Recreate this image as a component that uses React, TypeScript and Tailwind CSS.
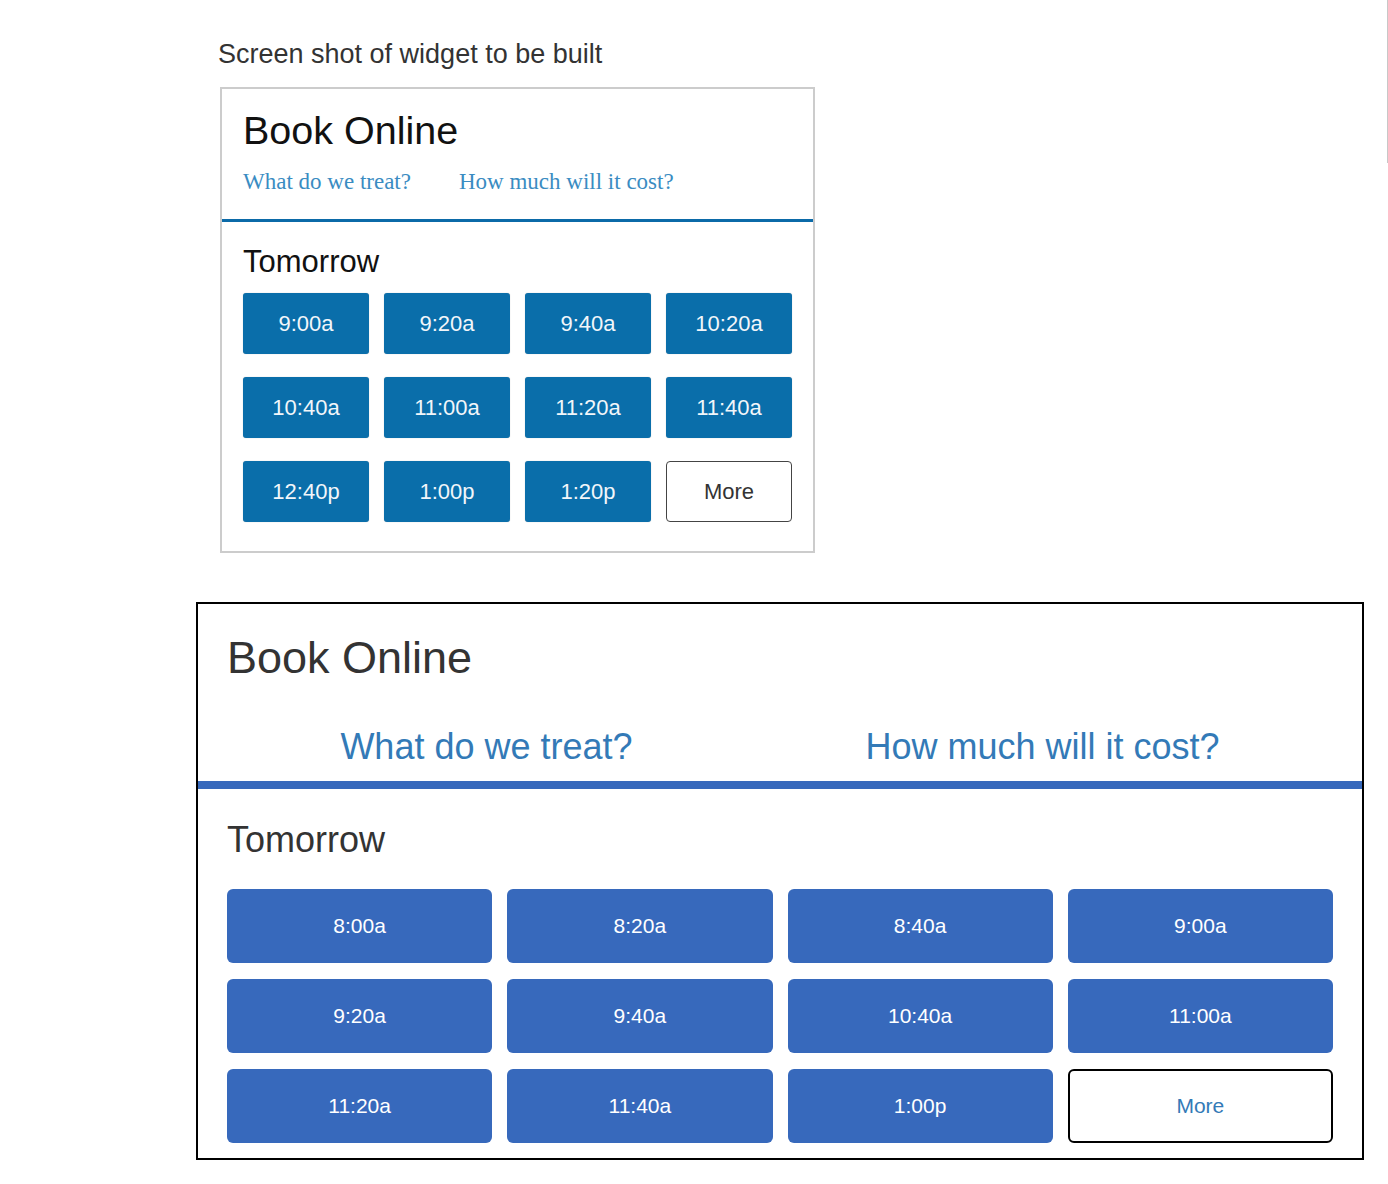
const oldTimes = ['9:00a', '9:20a', '9:40a', '10:20a', '10:40a', '11:00a', '11:20a', '11:40a', '12:40p', '1:00p', '1:20p'];
const newTimes = ['8:00a', '8:20a', '8:40a', '9:00a', '9:20a', '9:40a', '10:40a', '11:00a', '11:20a', '11:40a', '1:00p'];

// the mockup image from the ticket, rebuilt
const MockWidget = () => {
  return (
    <div className="ml-[24px] mt-[17px] w-[595px] border-2 border-[#cccccc] bg-white">
      <div className="px-[21px] pt-[22px] pb-[26px] border-b-[3px] border-[#0b6aa8]">
        <h3 className="text-[39.5px] leading-[39px] text-[#111111]">Book Online</h3>
        <div className="mt-[21px] flex text-[23px] leading-[22px] text-[#3a8cc2] font-['Liberation_Serif',serif]">
          <span className="w-[216px]">What do we treat?</span>
          <span>How much will it cost?</span>
        </div>
      </div>
      <div className="px-[21px] pt-[25px] pb-[29px]">
        <h4 className="text-[31px] leading-[30px] text-[#111111]">Tomorrow</h4>
        <div className="mt-[16px] grid grid-cols-4 gap-x-[15px] gap-y-[23px]">
          {oldTimes.map((t) => (
            <button
              key={t}
              className="h-[61px] rounded-[3px] bg-[#0a6eaa] text-[22px] text-[#f2f6fa] shadow-[0_0_1px_rgba(0,0,0,0.3)]"
            >
              {t}
            </button>
          ))}
          <button className="h-[61px] rounded-[4px] border-[1.5px] border-[#444444] bg-white text-[22px] text-[#333333]">
            More
          </button>
        </div>
      </div>
    </div>
  );
};

const BookOnline = () => {
  return (
    <div className="mt-[49px] w-[1168px] border-2 border-black bg-white">
      <div className="border-b-[8px] border-[#3769bc] px-[29px] pt-[32px] pb-[16px]">
        <h1 className="text-[45px] leading-[44px] text-[#333333]">Book Online</h1>
        <div className="mt-[49px] flex justify-center gap-[233px] text-[36px] leading-[36px] text-[#337ab7]">
          <a href="#">What do we treat?</a>
          <a href="#">How much will it cost?</a>
        </div>
      </div>
      <div className="px-[29px] pt-[33px] pb-[15px]">
        <h2 className="text-[36px] leading-[35px] text-[#333333]">Tomorrow</h2>
        <div className="mt-[32px] grid grid-cols-4 gap-x-[15px] gap-y-4">
          {newTimes.map((t) => (
            <button key={t} className="h-[74px] rounded-[6px] bg-[#3769bc] text-[21px] text-white">
              {t}
            </button>
          ))}
          <button className="h-[74px] rounded-[6px] border-2 border-black bg-white text-[21px] text-[#337ab7]">
            More
          </button>
        </div>
      </div>
    </div>
  );
};

export default function App() {
  return (
    <div className="relative min-h-[1184px] bg-white pl-[196px] pt-[38px] font-['Liberation_Sans',Arial,sans-serif]">
      <p className="ml-[22px] text-[27px] leading-[32px] text-[#333333]">Screen shot of widget to be built</p>
      <MockWidget />
      <BookOnline />
      <div className="absolute right-0 top-0 h-[163px] w-px bg-[#c8c8c8]" />
    </div>
  );
}
